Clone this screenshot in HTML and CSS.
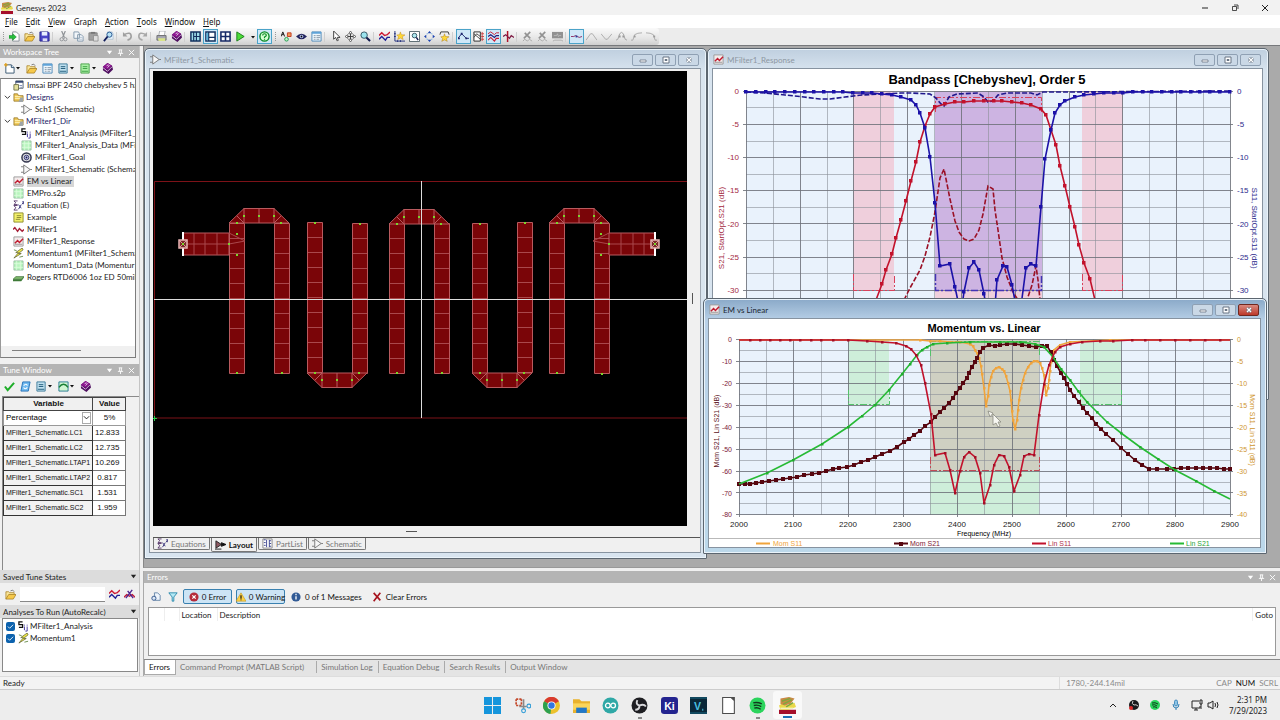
FILE: index.html
```html
<!DOCTYPE html>
<html lang="en">
<head>
<meta charset="utf-8">
<title>Genesys 2023</title>
<link rel="stylesheet" href="styles.css">
</head>
<body>
<svg class="defs" aria-hidden="true">
  <symbol id="app" viewBox="0 0 12 12"><path d="M0 9h12v3H0z" fill="#a50f2a"/><path d="M0 6l3-2 3 2 5-2 1 3-5 2H1z" fill="#e9d94a"/><path d="M1 1l6-1 4 1-3 4-4 1-3-1z" fill="#c98a45"/><path d="M2 3l6-2M3 5l6-3M5 7l5-3" stroke="#7da83e" stroke-width="1"/><path d="M1 8h9" stroke="#f3f0c0"/></symbol>
  <symbol id="import" viewBox="0 0 12 12"><path d="M4 1h4l3 3v7H4z" fill="#fff" stroke="#8a9098"/><path d="M0 5h4V3l4 3.5L4 10V8H0z" fill="#28c13c" stroke="#13802a" stroke-width=".6"/></symbol>
  <symbol id="open" viewBox="0 0 12 12"><path d="M1 11V3h3l1 1h5v2" fill="#f9e69a" stroke="#a57c1d" stroke-width=".8"/><path d="M1 11l3-5h8l-3 5z" fill="#f6c94c" stroke="#a57c1d" stroke-width=".8"/><path d="M6 2q3-2 4 1" fill="none" stroke="#777"/></symbol>
  <symbol id="save" viewBox="0 0 12 12"><path d="M1 1h9l1 1v9H1z" fill="#4a45c8" stroke="#25248a"/><path d="M3 1h6v4H3z" fill="#e8efff"/><path d="M4 8h5v3H4z" fill="#dcdcf5"/></symbol>
  <symbol id="cut" viewBox="0 0 12 12"><path d="M4 0l3 7M8 0L5 7" stroke="#8e9296" stroke-width="1.3"/><circle cx="4" cy="9" r="1.8" fill="none" stroke="#8e9296"/><circle cx="8" cy="9" r="1.8" fill="none" stroke="#8e9296"/></symbol>
  <symbol id="copy" viewBox="0 0 12 12"><path d="M1 1h5l1 2v5H1zM5 4h4l2 2v5H5z" fill="#f2f6fa" stroke="#8298ac"/><path d="M6 7h4M6 9h4" stroke="#9eb2c5" stroke-width=".7"/></symbol>
  <symbol id="paste" viewBox="0 0 12 12"><path d="M1 2h9v8H1z" fill="#a0a0a0" stroke="#858585"/><path d="M3 1h5v2H3z" fill="#777"/><path d="M6 5h5v6H6z" fill="#ddd" stroke="#888" stroke-width=".8"/></symbol>
  <symbol id="find" viewBox="0 0 12 12"><path d="M5 1h5l1 2v6H5z" fill="#e7f2fb" stroke="#9cb5c8" stroke-width=".7"/><circle cx="7" cy="4" r="2.8" fill="#b9e2f5" stroke="#23538e"/><path d="M5 6l-4 5" stroke="#101c5a" stroke-width="2"/></symbol>
  <symbol id="undo" viewBox="0 0 12 12"><path d="M2 4q8-4 8 2 0 3-4 4" fill="none" stroke="#a0a0a0" stroke-width="1.8"/><path d="M1 1v5h5z" fill="#a0a0a0"/></symbol>
  <symbol id="redo" viewBox="0 0 12 12"><path d="M10 4Q2 0 2 6q0 3 4 4" fill="none" stroke="#a8a8a8" stroke-width="1.8"/><path d="M11 1v5H6z" fill="#a8a8a8"/></symbol>
  <symbol id="print" viewBox="0 0 12 12"><path d="M4 0h6L9 5H3z" fill="#fff" stroke="#8a8f96" stroke-width=".7"/><path d="M1 5h10v5H1z" fill="#a9a9b4" stroke="#555" stroke-width=".8"/><path d="M2 8h8v3H3z" fill="#d8e488"/></symbol>
  <symbol id="book" viewBox="0 0 12 12"><path d="M6 0l5 3 1 4-5 5-6-4V4z" fill="#4f1060"/><path d="M1 5l5 4 5-5" fill="none" stroke="#e7c2ea"/><path d="M6 0L1 4l5 3 5-4z" fill="#8d1690"/><path d="M5 3l2-1 1 1-2 2" fill="none" stroke="#fff" stroke-width=".8"/></symbol>
  <symbol id="panes1" viewBox="0 0 12 12"><path d="M1 1h10v10H1z" fill="#9fdde9" stroke="#12305e" stroke-width="1.6"/><path d="M4 1v10M7 1v10M7 6h4M4 6h3" stroke="#12305e" stroke-width="1.2"/></symbol>
  <symbol id="panes2" viewBox="0 0 12 12"><path d="M1 1h10v10H1z" fill="#fff" stroke="#12305e" stroke-width="1.6"/><path d="M4 1v10M4 7h7" stroke="#12305e" stroke-width="1.4"/><path d="M1.500 2h2v8h-2z" fill="#5db4da"/></symbol>
  <symbol id="panes4" viewBox="0 0 12 12"><path d="M1 1h10v10H1z" fill="#fff" stroke="#172a66" stroke-width="1.7"/><path d="M6 1v10M1 6h10" stroke="#172a66" stroke-width="1.7"/></symbol>
  <symbol id="play" viewBox="0 0 12 12"><path d="M2 1l8 5-8 5z" fill="#4cdc39" stroke="#187c18"/></symbol>
  <symbol id="caret" viewBox="0 0 6 6"><path d="M1 2h4L3 4.500z" fill="#111"/></symbol>
  <symbol id="help" viewBox="0 0 12 12"><circle cx="6" cy="6" r="5" fill="#d6ffd2" stroke="#0a8a26" stroke-width="1.5"/><path d="M4 5q0-2 2-2t2 1.500Q8 5.500 6 6.500V8M6 9v1" fill="none" stroke="#0a8a26" stroke-width="1.3"/></symbol>
  <symbol id="shapes" viewBox="0 0 12 12"><path d="M0 6l2-5 2 5M1 4h2" fill="none" stroke="#111"/><path d="M7 2h4v4H7z" fill="#ef9a55" stroke="#c1361f"/><circle cx="6" cy="9" r="2" fill="#bff0c6" stroke="#1c9b4b"/></symbol>
  <symbol id="eye" viewBox="0 0 12 12"><path d="M0 6q6-6 12 0-6 6-12 0z" fill="#23255f"/><circle cx="6" cy="6" r="2" fill="#bfcdf5"/><circle cx="6" cy="6" r="1" fill="#000"/></symbol>
  <symbol id="props" viewBox="0 0 12 12"><path d="M1 1h10v10H1z" fill="#eef7fd" stroke="#4a86b8"/><path d="M1 1h10v2H1z" fill="#5ea3d8"/><path d="M3 5h2M6 5h4M3 7h2M6 7h4M3 9h2M6 9h3" stroke="#6d7f92" stroke-width=".8"/></symbol>
  <symbol id="cursor" viewBox="0 0 12 12"><path d="M4 0v9l2-2 2 4 1-1-1-3h3z" fill="#fff" stroke="#222" stroke-width=".9"/></symbol>
  <symbol id="pan" viewBox="0 0 12 12"><path d="M6 0l2 3H4zM6 12l2-3H4zM0 6l3-2v4zM12 6L9 4v4z" fill="#fff" stroke="#333" stroke-width=".7"/><path d="M6 3v6M3 6h6" stroke="#333"/></symbol>
  <symbol id="zoom" viewBox="0 0 12 12"><circle cx="4.500" cy="4.500" r="3.500" fill="#9ce4ee" stroke="#31525f"/><path d="M7 7l4 4" stroke="#111b4e" stroke-width="2.200"/></symbol>
  <symbol id="waves" viewBox="0 0 12 12"><path d="M0 5l3-3 3 3 3-1 3-3" fill="none" stroke="#cc1531" stroke-width="1.500"/><path d="M0 9l3-3 4 4 2-3h3" fill="none" stroke="#1e1e96" stroke-width="1.500"/></symbol>
  <symbol id="starchart" viewBox="0 0 12 12"><path d="M1 0v11h11M0 3h2M0 6h2M4 10v2M7 10v2" stroke="#1d2b79" fill="none"/><path d="M7 1l1 3 4 .3-3 2 1 3-3-1.600-3 1.600 1-3-2-2 3-.3z" fill="#ffd936" stroke="#c18814" stroke-width=".5"/></symbol>
  <symbol id="zoomfit" viewBox="0 0 12 12"><path d="M.5.5h11v11H.5z" fill="#fff" stroke="#4f5f66"/><circle cx="6" cy="5" r="2.500" fill="#aee8f0" stroke="#31525f"/><path d="M8 7l2 3" stroke="#111b4e" stroke-width="1.600"/></symbol>
  <symbol id="extents" viewBox="0 0 12 12"><path d="M6 0l2 2.500H4zM6 12l2-2.500H4zM0 6l2.500-2v4zM12 6L9.500 4v4z" fill="#1d43b0"/><path d="M3 3h1M8 3h1M3 9h1M8 9h1" stroke="#50a0d8"/></symbol>
  <symbol id="startable" viewBox="0 0 12 12"><path d="M2 1h8M2 1L1 4M10 1l1 3" stroke="#333" fill="none"/><path d="M6 3l1 3 4 .3-3 2 1 3-3-1.600-3 1.600 1-3-2-2 3-.3z" fill="#ffd936" stroke="#a77613" stroke-width=".5"/></symbol>
  <symbol id="trace" viewBox="0 0 12 12"><path d="M0 8l4-5 5 5h3" fill="none" stroke="#1b226b"/><path d="M3 2h2v2H3zM0 7h2v2H0zM8 7h2v2H8z" fill="#1b226b"/></symbol>
  <symbol id="smith" viewBox="0 0 12 12"><path d="M1 1h7v10H1z" fill="#fff" stroke="#222"/><path d="M1 7l3-4 4 3M1 3l7 6" stroke="#444" fill="none"/><path d="M10 1v10M9 3h3M9 6h3M9 9h3" stroke="#cc4040"/></symbol>
  <symbol id="waves3" viewBox="0 0 12 12"><path d="M0 3l3-2 4 3 2-2h3" fill="none" stroke="#cc1531"/><path d="M0 6l3-2 4 3 2-2h3" fill="none" stroke="#20207f" stroke-width="1.400"/><path d="M0 10l3-3 4 4 2-3h3" fill="none" stroke="#cc1531" stroke-width="1.200"/></symbol>
  <symbol id="marker" viewBox="0 0 12 12"><path d="M5 0v12" stroke="#b01028" stroke-width="1.600"/><path d="M0 6l3-2 4 4 2-3 3 2" fill="none" stroke="#7d1640" stroke-width="1.300"/></symbol>
  <symbol id="offx" viewBox="0 0 12 12"><path d="M2 8l7-7M3 2l6 6" stroke="#929292" stroke-width="1.800"/><path d="M1 11l2-2 3 2 2-2 3 2" fill="none" stroke="#a8a8a8"/></symbol>
  <symbol id="offbox" viewBox="0 0 12 12"><path d="M0 1h12v7H0z" fill="#919191"/><path d="M1 11l2-1h7l2 1" stroke="#aaa" fill="none"/><path d="M2 5h3l1-2 1 3 1-1h2" stroke="#ccc" fill="none" stroke-width=".7"/></symbol>
  <symbol id="flat" viewBox="0 0 12 12"><path d="M0 6h3l2-1 2 1 2 1 3-1" fill="none" stroke="#8b2760"/><path d="M5 5h2v2H5z" fill="#243a9a"/></symbol>
  <symbol id="peak" viewBox="0 0 12 12"><path d="M0 10l5-7h2l5 7" fill="none" stroke="#aaa"/></symbol>
  <symbol id="valley" viewBox="0 0 12 12"><path d="M0 3l5 6h2l5-6" fill="none" stroke="#aaa"/></symbol>
  <symbol id="bell" viewBox="0 0 12 12"><path d="M0 10l2-1 2-6q2-3 4 0l2 6 2 1" fill="none" stroke="#a2a2a2"/><path d="M3 5h2v2H3zM7 5h2v2H7z" fill="#999"/></symbol>
  <symbol id="rise" viewBox="0 0 12 12"><path d="M0 10h2l2-6q3-2 8-2" fill="none" stroke="#aaa"/><path d="M3 5h2v2H3z" fill="#999"/></symbol>
  <symbol id="fall" viewBox="0 0 12 12"><path d="M0 2q5 0 8 2l2 6h2" fill="none" stroke="#aaa"/><path d="M8 5h2v2H8z" fill="#999"/></symbol>
  <symbol id="newitem" viewBox="0 0 12 12"><path d="M2 2h6l3 3v6H2z" fill="#fff" stroke="#35536f"/><path d="M8 2v3h3" fill="#cfe0ef" stroke="#35536f"/><path d="M2 0v4M0 2h4" stroke="#e2a11d" stroke-width="1.400"/></symbol>
  <symbol id="sheetb" viewBox="0 0 12 12"><path d="M1 1h9v10H1z" fill="#bfe0ef" stroke="#3b7898"/><path d="M3 4h5M3 6h5M2 9h7" stroke="#1d5877"/></symbol>
  <symbol id="sheetg" viewBox="0 0 12 12"><path d="M1 1h9v10H1z" fill="#aaf0a5" stroke="#4aa04a"/><path d="M3 4h5M3 6h5M2 9h7" stroke="#3b9f43"/></symbol>
  <symbol id="data" viewBox="0 0 12 12"><path d="M1 1h10v10H1z" fill="#b8f5be" stroke="#8fb59a" stroke-width=".8"/><path d="M4 1v10M8 1v10M1 4h10M1 8h10" stroke="#dffbe0" stroke-width=".8"/></symbol>
  <symbol id="folder" viewBox="0 0 12 12"><path d="M1 10V2h4l1 2h5v6z" fill="#f0ca5b" stroke="#8f6d1e" stroke-width=".8"/><path d="M2 5h6M2 7h6" stroke="#fff3b8"/><path d="M8 6h3v5H6z" fill="#9fa5a8"/></symbol>
  <symbol id="workspace" viewBox="0 0 12 12"><path d="M3 1h8v8H3z" fill="#fff" stroke="#53636d"/><path d="M3 2h8" stroke="#364773" stroke-width="2"/><path d="M1 5h5v6H1z" fill="#e5e19c" stroke="#70734a"/><path d="M7 6h3M8 8h2" stroke="#7c8cb8"/></symbol>
  <symbol id="tri" viewBox="0 0 12 12"><path d="M3 1l7 5-7 5z" fill="#f7f7f7" stroke="#777"/><path d="M0 3h3M0 9h3M10 6h2" stroke="#777"/></symbol>
  <symbol id="sij" viewBox="0 0 12 12"><path d="M5 1H1v3h4v3H1" fill="none" stroke="#111" stroke-width="1.400"/><path d="M7 6v4M10 6v5H8M7 4v1M10 4v1" stroke="#3c309e" fill="none"/></symbol>
  <symbol id="goal" viewBox="0 0 12 12"><circle cx="6" cy="6" r="5" fill="#ddd" stroke="#33364e" stroke-width="1.600"/><circle cx="6" cy="6" r="2.500" fill="#c9cbe8" stroke="#33366e"/><circle cx="6" cy="6" r="1" fill="#15154e"/></symbol>
  <symbol id="graph" viewBox="0 0 12 12"><path d="M1 1h10v10H1z" fill="#f4ecec" stroke="#999"/><path d="M2 8l3-3 2 2 4-4" fill="none" stroke="#c01d31" stroke-width="1.600"/><path d="M2 9h8" stroke="#555" stroke-width=".6"/></symbol>
  <symbol id="equation" viewBox="0 0 12 12"><path d="M5 1H1l2 2-2 2h4M5 6H1l2 2.500L1 11h4" fill="none" stroke="#58386b"/><path d="M6 5l3 4M9 5l-3 5M10 2h2l-2 2h2" fill="none" stroke="#34307a"/></symbol>
  <symbol id="note" viewBox="0 0 12 12"><path d="M1 1h10v10H1z" fill="#f2f06a" stroke="#8b8a2c"/><path d="M4 4h5M4 6h5M3 8h5" stroke="#6c6c22" stroke-width=".8"/></symbol>
  <symbol id="wave" viewBox="0 0 12 12"><path d="M0 6l2-2 3 4 2-3 3 3 2-2" fill="none" stroke="#a61f38" stroke-width="1.500"/></symbol>
  <symbol id="bolt" viewBox="0 0 12 12"><path d="M10 0L3 5h3l-5 6 8-5H6l5-4z" fill="#f1e947" stroke="#5d6231" stroke-width=".8"/><path d="M1 2l3 1M7 10l4-1" stroke="#668b4d"/></symbol>
  <symbol id="board" viewBox="0 0 12 12"><path d="M0 8l3-3h9l-3 3z" fill="#7fb96c" stroke="#33602f" stroke-width=".6"/><path d="M0 8h9l3-3v1L9 10H0z" fill="#3e7a37"/></symbol>
  <symbol id="check" viewBox="0 0 12 12"><path d="M1 6l3 4 7-8" fill="none" stroke="#1fae2a" stroke-width="2.200"/></symbol>
  <symbol id="refresh" viewBox="0 0 12 12"><path d="M3 1h8L9 11H1z" fill="#71baf0" stroke="#2371b8"/><path d="M4 5q3-3 4 0M8 7q-3 3-4 0" fill="none" stroke="#fff" stroke-width="1.200"/></symbol>
  <symbol id="plotg" viewBox="0 0 12 12"><path d="M1 1h10v10H1z" fill="#cff6d2" stroke="#247890"/><path d="M1 7q5-7 10 0" fill="none" stroke="#198035" stroke-width="1.500"/></symbol>
  <symbol id="wavex" viewBox="0 0 12 12"><path d="M0 9l3-3 3 2 3-2 3 3" fill="none" stroke="#bc1736" stroke-width="1.400"/><path d="M2 10l7-9M4 2l6 8" stroke="#4c218f" stroke-width="1.500"/></symbol>
  <symbol id="pasteb" viewBox="0 0 12 12"><path d="M4 1h4l3 3v6H5z" fill="#eef4fb" stroke="#5a7da1"/><circle cx="3.500" cy="7.500" r="2.500" fill="#dce8f5" stroke="#3d5f94" stroke-width="1.200"/></symbol>
  <symbol id="filter" viewBox="0 0 12 12"><path d="M1 1h10L7 6v5H5V6z" fill="#b5e9f5" stroke="#1b7fa5"/></symbol>
  <symbol id="err" viewBox="0 0 12 12"><circle cx="6" cy="6" r="5.500" fill="#b52b3b"/><path d="M4 4l4 4M8 4l-4 4" stroke="#fff" stroke-width="1.500"/></symbol>
  <symbol id="warn" viewBox="0 0 12 12"><path d="M6 1l6 10H0z" fill="#ffd343" stroke="#c19421" stroke-width=".7"/><path d="M6 4v4M6 9v1" stroke="#111" stroke-width="1.400"/></symbol>
  <symbol id="info" viewBox="0 0 12 12"><circle cx="6" cy="6" r="5.500" fill="#315a95"/><path d="M6 5v4M6 2v2" stroke="#fff" stroke-width="1.600"/></symbol>
  <symbol id="redx" viewBox="0 0 12 12"><path d="M2 1l8 9M10 1L2 11" stroke="#a7141f" stroke-width="2"/></symbol>
  <symbol id="layout" viewBox="0 0 12 12"><path d="M1 2l6 4-6 4z" fill="#8d5961" stroke="#222"/><path d="M7 4l5 2-5 2zM0 11h7" fill="#111" stroke="#111"/></symbol>
  <symbol id="parts" viewBox="0 0 12 12"><path d="M1 1h10v10H1z" fill="#fff" stroke="#888"/><path d="M4 2H2M4 5H2M4 8H2M5 2v8M8 2v8M8 3h2M8 6h2M8 9h2" stroke="#38418d" fill="none"/></symbol>
  <symbol id="pin" viewBox="0 0 8 8"><path d="M2 1h4M3 1v4M5 1v4M1 5h6M4 5v3" stroke="#fff" fill="none"/></symbol>
  <symbol id="tick" viewBox="0 0 8 8"><path d="M1 4l2 2 4-4" stroke="#fff" fill="none"/></symbol>
  <symbol id="close" viewBox="0 0 8 8"><path d="M1 1l6 6M7 1L1 7" stroke="currentColor" fill="none"/></symbol>
  <symbol id="chev" viewBox="0 0 8 8"><path d="M1 2l3 3 3-3" stroke="currentColor" fill="none"/></symbol>
  <symbol id="down" viewBox="0 0 8 8"><path d="M1 2h6L4 6z" fill="currentColor"/></symbol>
  <symbol id="wmin" viewBox="0 0 10 8"><path d="M2 4h6v2H2z" fill="#fff" stroke="#697584" stroke-width=".8"/></symbol>
  <symbol id="wmax" viewBox="0 0 10 8"><path d="M2 1h6v6H2z" fill="#fff" stroke="#697584"/><path d="M4 3.500h2v1H4z" stroke="#697584" fill="none"/></symbol>
  <symbol id="wclose" viewBox="0 0 10 8"><path d="M3 2l4 4M7 2L3 6" stroke="#697584" stroke-width="2.600"/><path d="M3 2l4 4M7 2L3 6" stroke="#fff" stroke-width="1.300"/></symbol>
</svg>

<header class="titlebar">
  <svg class="ic"><use href="#app"/></svg><h1>Genesys 2023</h1>
  <div class="winbtns">
    <button aria-label="Minimize"><svg viewBox="0 0 8 8"><path d="M1 4h6" stroke="#222"/></svg></button>
    <button aria-label="Restore"><svg viewBox="0 0 8 8"><path d="M1.500 2.500h4v4h-4zM3 1h4v4" fill="none" stroke="#222" stroke-width=".8"/></svg></button>
    <button aria-label="Close"><svg viewBox="0 0 8 8"><use href="#close"/></svg></button>
  </div>
</header>
<nav class="menubar">
  <button><u>F</u>ile</button><button><u>E</u>dit</button><button><u>V</u>iew</button><button>Graph</button><button><u>A</u>ction</button><button><u>T</u>ools</button><button><u>W</u>indow</button><button><u>H</u>elp</button>
</nav>
<div class="toolrow">
<div class="toolbar">
  <i class="grip"></i>
  <button aria-label="Import"><svg class="ic"><use href="#import"/></svg></button><button aria-label="Open"><svg class="ic"><use href="#open"/></svg></button><button aria-label="Save"><svg class="ic"><use href="#save"/></svg></button>
  <i class="sep"></i>
  <button aria-label="Cut"><svg class="ic"><use href="#cut"/></svg></button><button aria-label="Copy"><svg class="ic"><use href="#copy"/></svg></button><button aria-label="Paste"><svg class="ic"><use href="#paste"/></svg></button><button aria-label="Find"><svg class="ic"><use href="#find"/></svg></button>
  <i class="sep"></i>
  <button aria-label="Undo"><svg class="ic"><use href="#undo"/></svg></button><button aria-label="Redo"><svg class="ic"><use href="#redo"/></svg></button>
  <i class="sep"></i>
  <button aria-label="Print"><svg class="ic"><use href="#print"/></svg></button><button aria-label="Help topics"><svg class="ic"><use href="#book"/></svg></button>
  <i class="sep"></i>
  <button aria-label="Panes"><svg class="ic"><use href="#panes1"/></svg></button><button class="on" aria-label="Side panes"><svg class="ic"><use href="#panes2"/></svg></button><button aria-label="Tile"><svg class="ic"><use href="#panes4"/></svg></button><button aria-label="Run"><svg class="ic"><use href="#play"/></svg></button><button class="narrow" aria-label="Run options"><svg class="car"><use href="#caret"/></svg></button><button class="on" aria-label="Help"><svg class="ic"><use href="#help"/></svg></button>
  <i class="grip"></i>
  <button aria-label="Shapes"><svg class="ic"><use href="#shapes"/></svg></button><button aria-label="View"><svg class="ic"><use href="#eye"/></svg></button><button aria-label="Properties"><svg class="ic"><use href="#props"/></svg></button>
  <i class="sep"></i>
  <button aria-label="Select"><svg class="ic"><use href="#cursor"/></svg></button><button aria-label="Pan"><svg class="ic"><use href="#pan"/></svg></button><button aria-label="Zoom"><svg class="ic"><use href="#zoom"/></svg></button>
  <i class="sep"></i>
  <button aria-label="Measurements"><svg class="ic"><use href="#waves"/></svg></button><button aria-label="Graph wizard"><svg class="ic"><use href="#starchart"/></svg></button><button aria-label="Zoom region"><svg class="ic"><use href="#zoomfit"/></svg></button><button aria-label="Zoom extents"><svg class="ic"><use href="#extents"/></svg></button><button aria-label="Table wizard"><svg class="ic"><use href="#startable"/></svg></button>
  <i class="sep"></i>
  <button class="on" aria-label="Trace symbols"><svg class="ic"><use href="#trace"/></svg></button><button aria-label="Chart legend"><svg class="ic"><use href="#smith"/></svg></button><button class="on" aria-label="Traces"><svg class="ic"><use href="#waves3"/></svg></button><button aria-label="Marker"><svg class="ic"><use href="#marker"/></svg></button>
  <i class="sep"></i>
  <button aria-label="Delete marker"><svg class="ic"><use href="#offx"/></svg></button><button aria-label="Delete all markers"><svg class="ic"><use href="#offx"/></svg></button><button aria-label="Marker box"><svg class="ic"><use href="#offbox"/></svg></button>
  <i class="sep"></i>
  <button class="on" aria-label="Normal marker"><svg class="ic"><use href="#flat"/></svg></button><button aria-label="Peak"><svg class="ic"><use href="#peak"/></svg></button><button aria-label="Valley"><svg class="ic"><use href="#valley"/></svg></button><button aria-label="Bandwidth"><svg class="ic"><use href="#bell"/></svg></button><button aria-label="Left edge"><svg class="ic"><use href="#rise"/></svg></button><button aria-label="Right edge"><svg class="ic"><use href="#fall"/></svg></button>
</div>
</div>

<main class="work">
<aside class="side">
  <section class="panel">
    <header class="cap"><h2>Workspace Tree</h2><svg class="g"><use href="#down"/></svg><svg class="g"><use href="#pin"/></svg><svg class="g"><use href="#close"/></svg></header>
    <div class="minibar">
      <button aria-label="New item"><svg class="ic"><use href="#newitem"/></svg><svg class="car"><use href="#caret"/></svg></button><button aria-label="Open item"><svg class="ic"><use href="#open"/></svg></button><button aria-label="Item properties"><svg class="ic"><use href="#props"/></svg></button><button aria-label="Sheets"><svg class="ic"><use href="#sheetb"/></svg><svg class="car"><use href="#caret"/></svg></button><button aria-label="Datasets"><svg class="ic"><use href="#sheetg"/></svg><svg class="car"><use href="#caret"/></svg></button><button aria-label="Tree help"><svg class="ic"><use href="#book"/></svg></button>
    </div>
    <div class="treebox">
      <ul class="tree">
        <li><svg class="ic"><use href="#workspace"/></svg><span>Imsai BPF 2450 chebyshev 5 ha</span></li>
        <li class="dir"><svg class="tw"><use href="#chev"/></svg><svg class="ic"><use href="#folder"/></svg><span>Designs</span></li>
        <li class="sub"><svg class="ic"><use href="#tri"/></svg><span>Sch1 (Schematic)</span></li>
        <li class="dir"><svg class="tw"><use href="#chev"/></svg><svg class="ic"><use href="#folder"/></svg><span>MFilter1_Dir</span></li>
        <li class="sub"><svg class="ic"><use href="#sij"/></svg><span>MFilter1_Analysis (MFilter1_S</span></li>
        <li class="sub"><svg class="ic"><use href="#data"/></svg><span>MFilter1_Analysis_Data (MFilt</span></li>
        <li class="sub"><svg class="ic"><use href="#goal"/></svg><span>MFilter1_Goal</span></li>
        <li class="sub"><svg class="ic"><use href="#tri"/></svg><span>MFilter1_Schematic (Schema</span></li>
        <li><svg class="ic"><use href="#graph"/></svg><span class="sel">EM vs Linear</span></li>
        <li><svg class="ic"><use href="#data"/></svg><span>EMPro.s2p</span></li>
        <li><svg class="ic"><use href="#equation"/></svg><span>Equation (E)</span></li>
        <li><svg class="ic"><use href="#note"/></svg><span>Example</span></li>
        <li><svg class="ic"><use href="#wave"/></svg><span>MFilter1</span></li>
        <li><svg class="ic"><use href="#graph"/></svg><span>MFilter1_Response</span></li>
        <li><svg class="ic"><use href="#bolt"/></svg><span>Momentum1 (MFilter1_Schema</span></li>
        <li><svg class="ic"><use href="#data"/></svg><span>Momentum1_Data (Momentur</span></li>
        <li><svg class="ic"><use href="#board"/></svg><span>Rogers RTD6006 1oz ED 50mil</span></li>
      </ul>
      <div class="hscroll"><i></i></div>
    </div>
  </section>
  <section class="panel">
    <header class="cap"><h2>Tune Window</h2><svg class="g"><use href="#down"/></svg><svg class="g"><use href="#pin"/></svg><svg class="g"><use href="#close"/></svg></header>
    <div class="minibar">
      <button aria-label="Apply"><svg class="ic"><use href="#check"/></svg></button><button aria-label="Refresh"><svg class="ic"><use href="#refresh"/></svg></button><button aria-label="Tune sheets"><svg class="ic"><use href="#sheetb"/></svg><svg class="car"><use href="#caret"/></svg></button><button aria-label="Tune plots"><svg class="ic"><use href="#plotg"/></svg><svg class="car"><use href="#caret"/></svg></button><button aria-label="Tune help"><svg class="ic"><use href="#book"/></svg></button>
    </div>
    <div class="tunebox">
      <table class="tune">
        <thead><tr><th>Variable</th><th>Value</th></tr></thead>
        <tbody>
        <tr class="pct"><td><div class="pick"><select aria-label="Step type"><option>Percentage</option></select><svg class="g"><use href="#chev"/></svg></div></td><td class="c">5%</td></tr>
        <tr><td>MFilter1_Schematic.LC1</td><td>12.833</td></tr>
        <tr><td>MFilter1_Schematic.LC2</td><td>12.735</td></tr>
        <tr><td>MFilter1_Schematic.LTAP1</td><td>10.269</td></tr>
        <tr><td>MFilter1_Schematic.LTAP2</td><td>&nbsp;0.817</td></tr>
        <tr><td>MFilter1_Schematic.SC1</td><td>&nbsp;1.531</td></tr>
        <tr><td>MFilter1_Schematic.SC2</td><td>&nbsp;1.959</td></tr>
        </tbody>
      </table>
    </div>
    <div class="subcap"><h3>Saved Tune States</h3><svg class="g"><use href="#down"/></svg></div>
    <div class="states"><button aria-label="Open state"><svg class="ic"><use href="#open"/></svg></button><input type="text" aria-label="Saved tune state"><button aria-label="Show state"><svg class="ic"><use href="#waves"/></svg></button><button aria-label="Remove state"><svg class="ic"><use href="#wavex"/></svg></button></div>
    <div class="subcap"><h3>Analyses To Run (AutoRecalc)</h3><svg class="g"><use href="#down"/></svg></div>
    <div class="runs">
      <label><input type="checkbox" checked><svg class="tk"><use href="#tick"/></svg><svg class="ic"><use href="#sij"/></svg>MFilter1_Analysis</label>
      <label><input type="checkbox" checked><svg class="tk"><use href="#tick"/></svg><svg class="ic"><use href="#bolt"/></svg>Momentum1</label>
    </div>
  </section>
</aside>

<div class="right">
<div class="mdi">
  <section class="win w-sch">
    <header class="wcap"><svg class="ic"><use href="#tri"/></svg><h2>MFilter1_Schematic</h2><div class="wb"><button aria-label="Minimize"><svg><use href="#wmin"/></svg></button><button aria-label="Maximize"><svg><use href="#wmax"/></svg></button><button aria-label="Close"><svg><use href="#wclose"/></svg></button></div></header>
    <div class="wbody sch">
      <svg class="canvas" viewBox="153 71 534 455" preserveAspectRatio="xMinYMin meet" role="img" aria-label="Filter layout">
        <defs>
          <symbol id="strip" viewBox="0 0 17 152" overflow="visible"><path d="M.5.5h15v150h-15z" fill="#7a0508" stroke="#b95a5e"/><path d="M1 15.500h14M1 30.500h14M1 45.500h14M1 60.500h14M1 75.500h14M1 90.500h14M1 105.500h14M1 120.500h14M1 135.500h14" stroke="#a9484c"/></symbol>
          <g id="bend" fill="#7a0508" stroke="#b95a5e"><path d="M0 15L15 .5h30L60 15zM15 0v15M30 0v15M45 0v15M15 15L8 8M45 15l7-7"/><path d="M7 14h2v2H7zM14 7h2v2h-2zM29 7h2v2h-2zM44 7h2v2h-2zM51 14h2v2h-2z" fill="#7bd62c" stroke="none"/></g>
          <g id="feed"><path d="M0 0h46v22H0z" fill="#7a0508" stroke="#b95a5e"/><path d="M11 0v22M22 0v22M34 0v22M0 11h46M46 0l16 8-16 3" fill="none" stroke="#a9484c"/><path d="M0-1v24" stroke="#fff" stroke-width="2"/><path d="M-4 7h8v8h-8z" fill="#7a2a2a" stroke="#eab6b6" stroke-width="1.500"/><path d="M-3 8l6 6M3 8l-6 6" stroke="#d99"/><path d="M-1 10h2v2h-2zM45 10h2v2h-2zM53 0h2v2h-2zM53 21h2v2h-2z" fill="#7bd62c"/></g>
        </defs>
        <path d="M153 71h534v455H153z" fill="#000"/>
        <path d="M687 181.500H154.500v236.500H687" fill="none" stroke="#7d1218"/>
        <use href="#strip" x="229" y="223" width="17" height="152"/><use href="#strip" x="274" y="223" width="17" height="152"/>
        <use href="#strip" x="307" y="222" width="17" height="152"/><use href="#strip" x="352" y="223" width="17" height="152"/>
        <use href="#strip" x="389" y="223" width="17" height="152"/><use href="#strip" x="434" y="223" width="17" height="152"/>
        <use href="#strip" x="472" y="223" width="17" height="152"/><use href="#strip" x="517" y="222" width="17" height="152"/>
        <use href="#strip" x="549" y="223" width="17" height="152"/><use href="#strip" x="594" y="223" width="17" height="152"/>
        <use href="#bend" transform="translate(229 208)"/><use href="#bend" transform="translate(389 209)"/><use href="#bend" transform="translate(549 208)"/>
        <use href="#bend" transform="translate(307 388) scale(1 -1)"/><use href="#bend" transform="translate(472 388) scale(1 -1)"/>
        <use href="#feed" transform="translate(183 233)"/><use href="#feed" transform="translate(655 233) scale(-1 1)"/>
        <path d="M236 372h2v2h-2zM281 372h2v2h-2zM314 222h2v2h-2zM359 223h2v2h-2zM396 372h2v2h-2zM441 372h2v2h-2zM479 223h2v2h-2zM524 222h2v2h-2zM556 372h2v2h-2zM601 373h2v2h-2z" fill="#7bd62c"/>
        <path d="M154 299.500h533M421.500 181v237" stroke="#dcdcdc"/>
        <path d="M152 418.500h5M154.500 416v5" stroke="#25d04c"/>
      </svg>
      <div class="vsplit"><i></i></div>
      <div class="hsplit"><i></i></div>
      <nav class="wtabs"><button><svg class="ic"><use href="#equation"/></svg>Equations</button><button class="cur"><svg class="ic"><use href="#layout"/></svg>Layout</button><button><svg class="ic"><use href="#parts"/></svg>PartList</button><button><svg class="ic"><use href="#tri"/></svg>Schematic</button></nav>
    </div>
  </section>

  <section class="win w-resp">
    <header class="wcap"><svg class="ic"><use href="#graph"/></svg><h2>MFilter1_Response</h2><div class="wb"><button aria-label="Minimize"><svg><use href="#wmin"/></svg></button><button aria-label="Maximize"><svg><use href="#wmax"/></svg></button><button aria-label="Close"><svg><use href="#wclose"/></svg></button></div></header>
    <div class="wbody">
      <svg class="chart" viewBox="713 69 549 324" role="img" aria-label="Bandpass response">
        <defs>
          <marker id="mb" markerWidth="4" markerHeight="4" refX="2" refY="2" markerUnits="userSpaceOnUse"><path d="M0 0h3.500v3.500H0z" fill="#1c12a8"/></marker>
          <marker id="mr" markerWidth="4" markerHeight="4" refX="2" refY="2" markerUnits="userSpaceOnUse"><path d="M0 0h3.500v3.500H0z" fill="#c2122c"/></marker>
          <marker id="ms" markerWidth="3" markerHeight="3" refX="1.500" refY="1.500" markerUnits="userSpaceOnUse"><path d="M0 0h3v3H0z" fill="#a50f26"/></marker>
          <marker id="md" markerWidth="4" markerHeight="4" refX="2" refY="2" markerUnits="userSpaceOnUse"><path d="M0 0h4v4H0z" fill="#56060f"/></marker>
          <marker id="mg" markerWidth="3" markerHeight="3" refX="1.500" refY="1.500" markerUnits="userSpaceOnUse"><path d="M0 0h3v3H0z" fill="#1fae2d"/></marker>
          <marker id="mo" markerWidth="3" markerHeight="3" refX="1.500" refY="1.500" markerUnits="userSpaceOnUse"><path d="M0 0h3v3H0z" fill="#f0a43c"/></marker>
        </defs>
        <text class="ctitle" x="987" y="84" text-anchor="middle">Bandpass [Chebyshev], Order 5</text>
        <path d="M746 91h484v300H746z" fill="#e9f2fc"/>
        <path d="M853 91h41v199h-41zM1082 91h41v199h-41zM935 290h107v101H935z" fill="#efcfdc"/>
        <path d="M935 91h107v199H935z" fill="#cdb4e2"/>
        <path d="M773.500 91v300M827.500 91v300M880.500 91v300M934.500 91v300M988.500 91v300M1042.500 91v300M1095.500 91v300M1149.500 91v300M1203.500 91v300M746 107.500h484M746 141.500h484M746 174.500h484M746 207.500h484M746 240.500h484M746 273.500h484" stroke="#8a8f98" stroke-opacity=".6"/>
        <path d="M746.500 91v300M800.500 91v300M853.500 91v300M907.500 91v300M961.500 91v300M1015.500 91v300M1069.500 91v300M1122.500 91v300M1176.500 91v300M1230.500 91v300M743 91.500h490M743 124.500h490M743 157.500h490M743 190.500h490M743 223.500h490M743 257.500h490M743 290.500h490" stroke="#6d7179" stroke-opacity=".85"/>
        <path d="M853.500 274v16.500h41V274M1082.500 274v16.500h40V274M935.500 112V97.500h106V112" fill="none" stroke="#d8415b" stroke-dasharray="7 2 2 2"/>
        <path d="M935.500 274v16.500h106V274" fill="none" stroke="#4234b4" stroke-width="1.500" stroke-dasharray="7 2 2 2"/>
        <polyline points="904,300 910,288 915,279 920,270 925,256 930,237 935,212 940,178 944,169 950,199 955,221 959,232 964,239 969,241 974,239 979,230 983,214 988,186 993,189 995,210 998,230 1002,258 1007,277 1013,292 1018,300" class="ln dash" stroke="#9a1026"/>
        <polyline points="1026,303 1032,285 1036,266 1038,280 1040,300" class="ln dash" stroke="#9a1026"/>
        <polyline points="746,92 766,93 785,95 804,97 820,99 830,99 845,97 862,95 882,94 901,93 911,93 930,94 936,98 941,104 944,106 949,97 957,94 978,93 984,97 988,102 993,101 998,95 1007,93 1031,93 1037,95 1043,92 1065,92 1230,91" class="ln dash" stroke="#20178c"/>
        <polyline points="876,300 882,284 886,270 892,254 896,238 901,220 906,201 911,181 916,162 920,142 925,126 930,114 935,107 945,104 955,102 964,102 974,101 984,101 994,101 1002,101 1012,102 1022,103 1031,105 1041,109 1046,115 1051,130 1056,145 1060,166 1065,186 1070,207 1075,227 1079,245 1084,263 1090,279 1095,300" class="ln" stroke="#c2122c" marker-mid="url(#mr)"/>
        <polyline points="746,92 756,92 766,92 775,92 785,92 795,92 805,92 814,92 824,92 834,92 843,92 853,93 863,93 872,93 882,94 892,95 901,97 911,100 916,105 920,113 925,128 930,157 935,203 940,266 950,264 955,287 959,306" class="ln" stroke="#1c12a8" marker-mid="url(#mb)" marker-start="url(#mb)"/>
        <polyline points="962,306 964,292 969,268 974,262 979,270 984,294 986,306" class="ln" stroke="#1c12a8" marker-mid="url(#mb)"/>
        <polyline points="995,306 997,280 1003,266 1007,267 1012,285 1016,306" class="ln" stroke="#1c12a8" marker-mid="url(#mb)"/>
        <polyline points="1021,306 1026,268 1031,264 1036,266 1041,207 1045,159 1051,130 1055,113 1060,105 1065,101 1075,97 1084,95 1094,94 1104,93 1114,93 1123,93 1133,92 1143,92 1152,92 1162,92 1172,92 1181,92 1191,92 1200,92 1210,92 1220,92 1230,92" class="ln" stroke="#1c12a8" marker-mid="url(#mb)" marker-end="url(#mb)"/>
        <g class="ax" text-anchor="end" fill="#a32841"><text x="739" y="94">0</text><text x="739" y="127">-5</text><text x="739" y="160">-10</text><text x="739" y="193">-15</text><text x="739" y="227">-20</text><text x="739" y="260">-25</text><text x="739" y="293">-30</text></g>
        <g class="ax" fill="#2c2a8c"><text x="1237" y="94">0</text><text x="1237" y="127">-5</text><text x="1237" y="160">-10</text><text x="1237" y="193">-15</text><text x="1237" y="227">-20</text><text x="1237" y="260">-25</text><text x="1237" y="293">-30</text></g>
        <text class="ax" fill="#a32841" text-anchor="middle" transform="translate(724 228) rotate(-90)">S21, StartOpt.S21 (dB)</text>
        <text class="ax" fill="#2c2a8c" text-anchor="middle" transform="translate(1252 228) rotate(90)">S11, StartOpt.S11 (dB)</text>
      </svg>
    </div>
  </section>

  <section class="win active w-em">
    <header class="wcap"><svg class="ic"><use href="#graph"/></svg><h2>EM vs Linear</h2><div class="wb"><button aria-label="Minimize"><svg><use href="#wmin"/></svg></button><button aria-label="Maximize"><svg><use href="#wmax"/></svg></button><button class="x" aria-label="Close"><svg><use href="#wclose"/></svg></button></div></header>
    <div class="wbody">
      <svg class="chart" viewBox="709 319 551 229" role="img" aria-label="Momentum versus linear response">
        <text class="ctitle sm" x="984" y="332" text-anchor="middle">Momentum vs. Linear</text>
        <path d="M739 339h491v176H739z" fill="#e9f2fc"/>
        <path d="M848 339h41v66h-41zM1080 339h41v66h-41zM930 471h109v44H930z" fill="#ceeeda"/>
        <path d="M930 339h109v132H930z" fill="#cfd0c2"/>
        <path d="M766.500 339v176M821.500 339v176M875.500 339v176M930.500 339v176M984.500 339v176M1039.500 339v176M1093.500 339v176M1148.500 339v176M1203.500 339v176M739 350.500h491M739 372.500h491M739 394.500h491M739 416.500h491M739 438.500h491M739 460.500h491M739 482.500h491M739 503.500h491" stroke="#8a8f98" stroke-opacity=".6"/>
        <path d="M739.500 339v178M793.500 339v178M848.500 339v178M903.500 339v178M957.500 339v178M1012.500 339v178M1066.500 339v178M1121.500 339v178M1175.500 339v178M1230.500 339v178M736 339.500h497M736 361.500h497M736 383.500h497M736 405.500h497M736 427.500h497M736 449.500h497M736 471.500h497M736 492.500h497M736 514.500h497" stroke="#6d7179" stroke-opacity=".85"/>
        <path d="M848.500 390v14.500h41V390M1080.500 390v14.500h41V390M930.500 356v-14.500h109V356" fill="none" stroke="#54c26a" stroke-dasharray="7 2 2 2"/>
        <path d="M930.500 457v13.500h109V457" fill="none" stroke="#c24a55" stroke-dasharray="7 2 2 2"/>
        <polyline points="739,340 920,340 930,341 940,341 950,342 960,342 970,344 973,346 975,350 977,353 979,358 981,366 982,374 984,388 986,406 988,396 989,385 991,377 993,371 996,368 999,367 1002,369 1004,371 1006,376 1008,383 1010,391 1011,400 1012,411 1013,420 1015,429 1017,420 1018,410 1019,400 1021,388 1023,380 1025,373 1028,367 1031,363 1034,361 1037,361 1040,363 1042,368 1044,375 1045,386 1046,395 1048,388 1049,380 1050,371 1051,362 1054,350 1060,345 1070,342 1110,340 1230,340" class="ln" stroke="#f0a43c" marker-mid="url(#mo)"/>
        <polyline points="739,484 745,484 750,484 756,483 762,482 769,481 776,480 783,479 790,478 797,477 804,475 812,474 819,473 826,471 833,469 839,468 847,467 854,465 861,462 868,460 875,457 882,454 890,451 897,447 904,442 909,439 914,435 920,431 925,426 931,422 935,417 940,412 944,408 949,403 953,398 956,393 960,388 963,383 967,378 969,373 972,367 975,362 977,358 980,352 983,348 989,345 995,346 1000,345 1007,344 1015,344 1022,345 1029,346 1036,347 1042,346 1047,346 1051,352 1054,360 1057,366 1061,373 1064,378 1067,384 1070,390 1074,396 1079,402 1083,408 1087,413 1092,418 1096,424 1101,429 1106,434 1113,440 1121,448 1128,454 1135,460 1142,465 1149,469 1157,469 1167,469 1174,469 1181,468 1188,468 1196,468 1203,468 1210,468 1217,468 1224,469 1230,469" class="ln" stroke="#56060f" marker-mid="url(#md)" marker-start="url(#md)" marker-end="url(#md)"/>
        <polyline points="739,484 767,473 793,460 822,444 848,427 862,416 875,405 889,390 902,374 910,364 917,355 922,350 927,347 933,344 947,343 970,342 1000,342 1020,342 1035,344 1044,347 1053,357 1061,369 1070,380 1078,391 1087,402 1097,412 1107,422 1121,433 1140,447 1158,459 1175,470 1196,481 1214,491 1230,499" class="ln" stroke="#27ba35" marker-mid="url(#mg)"/>
        <polyline points="739,340 750,340 760,340 770,340 780,340 790,340 800,340 811,340 821,340 833,340 848,340 867,341 882,342 896,343 906,346 911,349 916,355 921,365 925,383 931,414 935,455 945,453 950,470 955,493 960,471 964,457 969,452 975,457 980,473 984,503 990,485 994,465 999,455 1004,456 1009,467 1014,491 1020,475 1024,456 1029,454 1034,455 1039,415 1044,384 1049,365 1055,352 1060,347 1070,344 1082,342 1100,341 1113,341 1132,340 1145,340 1160,340 1175,340 1190,340 1205,340 1220,340 1230,340" class="ln" stroke="#c2122c" marker-mid="url(#ms)"/>
        <g class="ax sm" text-anchor="end" fill="#7c2036"><text x="732" y="342">0</text><text x="732" y="364">-10</text><text x="732" y="386">-20</text><text x="732" y="408">-30</text><text x="732" y="430">-40</text><text x="732" y="452">-50</text><text x="732" y="474">-60</text><text x="732" y="496">-70</text><text x="732" y="517">-80</text></g>
        <g class="ax sm" fill="#cf962f"><text x="1237" y="342">0</text><text x="1237" y="364">-5</text><text x="1237" y="386">-10</text><text x="1237" y="408">-15</text><text x="1237" y="430">-20</text><text x="1237" y="452">-25</text><text x="1237" y="474">-30</text><text x="1237" y="496">-35</text><text x="1237" y="517">-40</text></g>
        <g class="ax" text-anchor="middle" fill="#222"><text x="739" y="527">2000</text><text x="793" y="527">2100</text><text x="848" y="527">2200</text><text x="902" y="527">2300</text><text x="957" y="527">2400</text><text x="1012" y="527">2500</text><text x="1066" y="527">2600</text><text x="1121" y="527">2700</text><text x="1175" y="527">2800</text><text x="1230" y="527">2900</text></g>
        <text class="ax sm" x="984" y="536" text-anchor="middle" fill="#000">Frequency (MHz)</text>
        <text class="ax sm" fill="#5c1224" text-anchor="middle" transform="translate(719 431) rotate(-90)">Mom S21, Lin S21 (dB)</text>
        <text class="ax sm" fill="#cf962f" text-anchor="middle" transform="translate(1250 430) rotate(90)">Mom S11, Lin S11 (dB)</text>
        <path d="M709 538.500h551" stroke="#b9b9b9"/>
        <path d="M756 543.500h14" stroke="#f0a43c" stroke-width="2"/><path d="M894 543.500h14" stroke="#56060f" stroke-width="2"/><path d="M899 542h4v4h-4z" fill="#56060f"/><path d="M1032 543.500h14" stroke="#c2122c" stroke-width="2"/><path d="M1170 543.500h14" stroke="#27ba35" stroke-width="2"/>
        <g class="ax sm"><text x="773" y="546" fill="#f0a43c">Mom S11</text><text x="910" y="546" fill="#7c2036">Mom S21</text><text x="1048" y="546" fill="#b0304a">Lin S11</text><text x="1186" y="546" fill="#27a338">Lin S21</text></g>
        <path d="M988 411l5 2-3 4zM993 414v11l3-2 2 4 2-1-2-4h3z" fill="#f7f7f2" stroke="#8a8a80" stroke-width=".8"/>
      </svg>
    </div>
  </section>
</div>

<section class="errors">
  <header class="cap"><h2>Errors</h2><svg class="g"><use href="#down"/></svg><svg class="g"><use href="#pin"/></svg><svg class="g"><use href="#close"/></svg></header>
  <div class="ebar">
    <button aria-label="Copy errors"><svg class="ic"><use href="#pasteb"/></svg></button><button aria-label="Filter"><svg class="ic"><use href="#filter"/></svg></button>
    <button class="tog"><svg class="ic"><use href="#err"/></svg>0 Error</button><button class="tog"><svg class="ic"><use href="#warn"/></svg>0 Warning</button><button class="plain"><svg class="ic"><use href="#info"/></svg>0 of 1 Messages</button><button class="plain"><svg class="ic"><use href="#redx"/></svg>Clear Errors</button>
  </div>
  <div class="elist"><table><thead><tr><th></th><th></th><th>Location</th><th>Description</th><th class="goto">Goto</th></tr></thead></table></div>
  <nav class="etabs"><button class="cur">Errors</button><button class="wide">Command Prompt (MATLAB Script)</button><button>Simulation Log</button><button>Equation Debug</button><button>Search Results</button><button>Output Window</button></nav>
</section>
</div>
</main>

<footer class="status"><span class="ready">Ready</span><span class="coord">1780,-244.14mil</span><span>CAP</span><span class="num">NUM</span><span>SCRL</span></footer>
<footer class="taskbar">
  <div class="apps">
    <button aria-label="Start"><svg viewBox="0 0 16 16"><path d="M0 0h7.500v7.500H0zM8.500 0H16v7.500H8.500zM0 8.500h7.500V16H0zM8.500 8.500H16V16H8.500z" fill="#1595dc"/></svg></button>
    <button aria-label="Snipping Tool"><svg viewBox="0 0 16 16"><path d="M2 2h6M2 2v6h5V2" fill="none" stroke="#c3482b" stroke-width="1.600" stroke-dasharray="2 1"/><path d="M9 2v9M5 9h7" stroke="#888" stroke-width="1.500"/><circle cx="9" cy="13" r="1.800" fill="none" stroke="#2b9ad6"/><circle cx="14" cy="8.500" r="1.800" fill="none" stroke="#2b9ad6"/></svg></button>
    <button aria-label="Chrome"><svg viewBox="0 0 16 16"><circle cx="8" cy="8" r="8" fill="#ecc12c"/><path d="M8 8L1 4a8 8 0 0 1 14 0z" fill="#d93a2e"/><path d="M8 8L1 4a8 8 0 0 0 6 12z" fill="#2da04e"/><circle cx="8" cy="8" r="3.800" fill="#fff"/><circle cx="8" cy="8" r="3" fill="#3476e0"/></svg></button>
    <button aria-label="File Explorer"><svg viewBox="0 0 16 16"><path d="M0 2h6l2 2h8v11H0z" fill="#e9b22d"/><path d="M0 6h16v6H0z" fill="#fbd55b"/><path d="M3 10h10v5H3z" fill="#2277c7"/></svg></button>
    <button aria-label="Arduino"><svg viewBox="0 0 16 16"><circle cx="8" cy="8" r="7.500" fill="#2fa8a6"/><circle cx="5.500" cy="8" r="2.200" fill="none" stroke="#fff" stroke-width="1.200"/><circle cx="10.500" cy="8" r="2.200" fill="none" stroke="#fff" stroke-width="1.200"/></svg></button>
    <button class="run" aria-label="OBS Studio"><svg viewBox="0 0 16 16"><circle cx="8" cy="8" r="7.500" fill="#1e1e22"/><path d="M8 8q-4-1-2-5M8 8q4-2 6 1M8 8q0 4-4 4" fill="none" stroke="#d9d9dc" stroke-width="1.800"/></svg></button>
    <button aria-label="KiCad"><svg viewBox="0 0 16 16"><rect width="16" height="16" rx="3" fill="#24248f"/><text x="8" y="12" text-anchor="middle" fill="#fff" class="logo">Ki</text></svg></button>
    <button aria-label="Vegas"><svg viewBox="0 0 16 16"><path d="M0 0h16v16H0z" fill="#0a2839"/><path d="M0 1h16M0 15h16" stroke="#1a6a86"/><text x="7" y="12" text-anchor="middle" fill="#4ac0e0" class="logo">V</text><path d="M12 11v2" stroke="#4ac0e0"/></svg></button>
    <button aria-label="LibreOffice"><svg viewBox="0 0 16 16"><path d="M2.500.5h8l3 3v12h-11z" fill="#fff" stroke="#4b4b4b"/><path d="M10 0l4 4v-4z" fill="#4b4b4b"/></svg></button>
    <button class="run" aria-label="Spotify"><svg viewBox="0 0 16 16"><circle cx="8" cy="8" r="7.500" fill="#2bd45c"/><path d="M4 5.500q4-1 8 1M4.500 8q4-1 7 1M5 10.500q3-1 6 1" fill="none" stroke="#10381c" stroke-width="1.300"/></svg></button>
    <button class="curapp" aria-label="Genesys"><svg viewBox="0 0 12 12"><use href="#app"/></svg></button>
  </div>
  <div class="tray">
    <button aria-label="Hidden icons"><svg viewBox="0 0 12 12"><path d="M3 8l3-3 3 3" fill="none" stroke="#222"/></svg></button>
    <button aria-label="Recording"><svg viewBox="0 0 12 12"><circle cx="6" cy="6" r="5" fill="#1a1a1c"/><path d="M6 6q-3-1-1-4M6 6q2-1 4 1" fill="none" stroke="#ccc"/><circle cx="3" cy="9" r="2" fill="#da2a2a"/></svg></button>
    <button aria-label="Spotify tray"><svg viewBox="0 0 12 12"><circle cx="6" cy="6" r="5" fill="#2bd45c"/><path d="M3 4q3-1 6 1M3 6q3-1 5 1M4 8q2-1 4 1" fill="none" stroke="#10381c"/></svg></button>
    <button aria-label="Microphone"><svg viewBox="0 0 12 12"><rect x="4.500" y="1" width="3" height="6" rx="1.500" fill="#8cc3e6" stroke="#2d7fb5" stroke-width=".8"/><path d="M3 5q0 4 3 4t3-4M6 9v2" fill="none" stroke="#2d7fb5"/></svg></button>
    <button aria-label="Network"><svg viewBox="0 0 12 12"><path d="M8 2H1v7h8V7M3 11h4M5 9v2M9 1h2v4H9zM10 5v5" fill="none" stroke="#222"/></svg></button>
    <button class="vol" aria-label="Volume"><svg viewBox="0 0 12 12"><path d="M1 4h2l3-2v8L3 8H1zM8 4q1 2 0 4M10 3q2 3 0 6" fill="none" stroke="#222"/></svg></button>
    <div class="clock"><span>2:31 PM</span><span>7/29/2023</span></div>
  </div>
</footer>
</body>
</html>
```
FILE: styles.css
```css
* { box-sizing: border-box; }
body { margin: 0; height: 100vh; display: flex; flex-direction: column; overflow: hidden; background: #f0f0f0; color: #222; font: 8px/12px Lato, "Noto Sans", sans-serif; }
button { border: 0; padding: 0; margin: 0; background: none; color: inherit; font: inherit; white-space: nowrap; display: flex; align-items: center; justify-content: center; }
h1, h2, h3 { margin: 0; font-size: inherit; font-weight: 400; white-space: nowrap; }
ul { margin: 0; padding: 0; list-style: none; }
svg { flex: none; display: block; }
.defs { position: absolute; width: 0; height: 0; }
.ic { width: 11px; height: 11px; }
.car { width: 6px; height: 6px; }
.g { width: 7px; height: 7px; }

.titlebar { flex: none; height: 15px; display: flex; align-items: center; gap: 3px; padding-left: 1px; background: #f2f2f2; }
.titlebar .ic { width: 12px; height: 12px; }
.winbtns { margin-left: auto; display: flex; }
.winbtns button { width: 30px; height: 15px; color: #222; }
.winbtns svg { width: 8px; height: 8px; }
.menubar { flex: none; height: 13px; display: flex; gap: 8px; padding-left: 5px; background: #fff; color: #111; font-family: "Noto Sans", sans-serif; }
.toolrow { flex: none; height: 18px; display: flex; background: #ececec; border-bottom: 1px solid #77797c; }
.toolbar { display: flex; align-items: center; background: linear-gradient(#fafafa, #e6e6e6 60%, #cfcfcf); border-radius: 0 3px 3px 0; }
.toolbar button { width: 15px; height: 15px; }
.toolbar .narrow { width: 9px; }
.toolbar .on { background: #cfe8f8; border: 1px solid #4ba3c9; }
.grip { width: 7px; height: 9px; border-left: 1px dotted #999; margin-left: 3px; margin-right: -3px; }
.sep { width: 4px; height: 10px; border-left: 1px solid #cfcfcf; }

.work { flex: 1; min-height: 0; display: flex; }
.side { width: 140px; flex: none; display: flex; flex-direction: column; gap: 6px; border-right: 1px solid #c4c4c4; background: #f0f0f0; }
.panel { flex: 1; min-height: 0; display: flex; flex-direction: column; }
.cap { flex: none; height: 12px; display: flex; align-items: center; gap: 4px; padding: 0 4px 0 3px; background: #b4b4b4; color: #fff; }
.cap h2 { flex: 1; }
.minibar { flex: none; height: 20px; display: flex; align-items: center; gap: 5px; padding-left: 4px; }
.treebox { flex: 1; min-height: 0; margin-right: 3px; background: #fff; border: 1px solid #7d7d7d; border-left-color: #999; display: flex; flex-direction: column; overflow: hidden; }
.tree { flex: 1; overflow: hidden; }
.tree li { height: 12px; display: flex; align-items: center; gap: 3px; padding-left: 12px; white-space: nowrap; }
.tree .sub { padding-left: 20px; }
.tree .dir { padding-left: 3px; gap: 2px; color: #1c1a66; }
.tree .tw { width: 7px; height: 7px; color: #222; }
.tree .sel { background: #d6d6d6; line-height: 11px; padding-right: 2px; }
.hscroll { height: 11px; background: #f0f0f0; padding: 4px 0 0 11px; }
.hscroll i { display: block; width: 56%; height: 1px; background: #808080; }
.tunebox { flex: 1; min-height: 0; margin-left: 2px; border-top: 1px solid #8a8a8a; border-left: 1px solid #8a8a8a; font: 8px/12px "Liberation Sans", Arial, sans-serif; color: #111; }
.tune { width: 123px; table-layout: fixed; border-collapse: collapse; }
.tune th:first-child { width: 89px; }
.tune th, .tune td { height: 15px; padding: 0 1px 0 2px; border: 1px solid #444; white-space: nowrap; }
.tune th { height: 13px; background: #f0f0f0; }
.tune td { background: #fff; border-color: #777; }
.tune td:first-child { background: #f2f2f2; border-color: #333; font-size: 7px; }
.tune .pct td { background: #fff; border-color: #999; }
.tune .c { text-align: center; }
.pick { display: flex; align-items: center; }
.pick select { flex: 1; appearance: none; border: 0; padding: 0; background: none; font: inherit; font-size: 8px; height: 12px; }
.pick .g { width: 9px; height: 12px; border: 1px solid #aaa; }
.subcap { flex: none; height: 13px; display: flex; align-items: center; justify-content: space-between; padding: 0 2px 0 3px; background: #dcdcdc; }
.states { flex: none; height: 22px; display: flex; align-items: center; gap: 4px; padding: 0 4px 0 5px; }
.states input { flex: 1; min-width: 0; height: 15px; border: 0; border-bottom: 1px solid #888; background: #fff; }
.runs { flex: none; height: 54px; margin: 0 1px 4px 2px; padding: 1px 3px; background: #fff; border: 1px solid #888; }
.runs label { height: 12px; display: flex; align-items: center; gap: 1px; }
.runs input { appearance: none; width: 9px; height: 9px; margin: 0; background: #0c62ae; border-radius: 2px; }
.runs .tk { width: 7px; height: 7px; margin-left: -9px; margin-right: 3px; }

.right { flex: 1; min-width: 0; display: flex; flex-direction: column; gap: 3px; padding-left: 3px; }
.mdi { flex: 1; min-height: 0; position: relative; overflow: hidden; background: #aaa; border-left: 1px solid #888; border-bottom: 1px solid #999; }
.win { position: absolute; display: flex; flex-direction: column; border: 1px solid #5c6670; border-radius: 5px 5px 1px 1px; background: linear-gradient(#bfcfdf, #d8e4ef 22px, #d8e4ef); padding: 0 5px 5px 4px; box-shadow: inset 0 0 0 1px #eaf3fa; }
.w-sch { left: 0; top: 2px; width: 563px; height: 511px; }
.w-resp { left: 563px; top: 2px; width: 562px; height: 352px; }
.w-em { left: 559px; top: 252px; width: 564px; height: 256px; }
.active { background: linear-gradient(#8aa9c8, #b9d1e8 22px, #bcd8ea); }
.wcap { flex: none; height: 19px; display: flex; align-items: center; gap: 3px; padding: 2px 2px 0 1px; color: #8d97a2; }
.active .wcap { color: #1c2732; }
.wb { margin-left: auto; display: flex; gap: 2px; }
.wb button { width: 21px; height: 12px; border: 1px solid #8fa0b3; border-radius: 2px; background: #cad8e6; }
.wb svg { width: 10px; height: 8px; }
.wb .x { background: linear-gradient(#d98a80, #bd3829); border-color: #70281f; }
.wbody { flex: 1; min-height: 0; background: #fff; border: 1px solid #8793a0; overflow: hidden; }
.chart { width: 100%; height: auto; }
.sch { display: grid; grid-template: 1fr 12px 14px / 1fr 13px; padding: 2px 0 0 3px; background: #f0f0f0; border-right-color: #a0a9b4; }
.canvas { width: 100%; height: 100%; background: #000; min-height: 0; }
.vsplit { display: flex; align-items: center; padding-left: 5px; }
.vsplit i { width: 1px; height: 11px; background: #555; }
.hsplit { grid-column: 1 / -1; display: flex; align-items: center; justify-content: center; padding-right: 30px; border-bottom: 1px solid #555; }
.hsplit i { width: 11px; height: 1px; background: #555; }
.wtabs { grid-column: 1 / -1; display: flex; gap: 1px; color: #777; }
.wtabs button { gap: 3px; height: 12px; padding: 0 3px; border: 1px solid #777; border-top: 0; border-radius: 0 0 2px 2px; }
.wtabs .cur { height: 14px; color: #111; font-weight: 700; }
.ctitle { font: bold 13px "Liberation Sans", Arial, sans-serif; }
.ctitle.sm { font-size: 11px; }
.ax { font: 8px "Liberation Sans", Arial, sans-serif; }
.ax.sm { font-size: 7px; }
.ln { fill: none; stroke-width: 1.6; }
.dash { stroke-dasharray: 5 2; }

.errors { flex: none; display: flex; flex-direction: column; height: 105px; border-left: 1px solid #aaa; }
.ebar { flex: none; height: 24px; display: flex; align-items: center; gap: 4px; padding: 3px 0 0 7px; }
.ebar button { gap: 4px; color: #111; }
.ebar > button:nth-child(2) { margin: 0 1px 0 3px; }
.ebar .ic { width: 10px; height: 10px; }
.ebar .tog { height: 15px; width: 49px; gap: 3px; border: 1px solid #3a81b0; border-radius: 2px; background: #cce4f5; }
.ebar .plain { margin: 0 4px 0 2px; }
.elist { flex: 1; margin: 0 4px; background: #fff; border: 1px solid #999; }
.elist table { width: 100%; border-collapse: collapse; }
.elist th { height: 13px; padding: 0 2px; font-weight: 400; text-align: left; border-right: 1px solid #eee; width: 15px; }
.elist th:nth-child(3) { width: 38px; }
.elist th:nth-child(4) { width: auto; }
.elist .goto { width: 22px; border: 0; }
.etabs { flex: none; height: 17px; margin-top: 3px; display: flex; align-items: flex-start; border-top: 1px solid #888; background: #e4e4e4; color: #777; }
.etabs button { height: 12px; margin-top: 1px; padding: 0 5px 0 4px; border-left: 1px solid #aaa; }
.etabs .cur { height: 15px; margin: 0; background: #fff; color: #111; border: 1px solid #aaa; border-top: 0; }
.etabs .wide { border: 0; padding-right: 12px; }

.status { flex: none; height: 14px; display: flex; align-items: center; gap: 4px; padding: 0 2px 0 3px; background: #f3f3f3; border-top: 1px solid #ddd; border-bottom: 1px solid #ccc; color: #8a8a8a; }
.status .ready { flex: 1; color: #222; }
.status .coord { width: 153px; padding-left: 6px; border-left: 1px solid #ddd; }
.status .num { color: #111; }
.taskbar { flex: none; height: 30px; display: flex; align-items: center; justify-content: flex-end; position: relative; background: #ededed; font-family: "Noto Sans", sans-serif; }
.apps { position: absolute; left: 50%; top: 0; width: 324px; height: 30px; margin-left: -162px; display: flex; align-items: center; }
.apps button { flex: 1; height: 28px; border-radius: 3px; }
.apps svg { width: 17px; height: 17px; }
.run { background: linear-gradient(#888, #888) center 26px / 4px 2px no-repeat; }
.curapp { background: linear-gradient(#1b6fb5, #1b6fb5) center 25px / 9px 2px no-repeat, #f9f9f9; }
.logo { font: bold 10px "Liberation Sans", Arial, sans-serif; }
.tray { display: flex; align-items: center; gap: 9px; padding-right: 13px; }
.tray svg { width: 12px; height: 12px; }
.tray .vol { margin-left: -5px; }
.clock { display: flex; flex-direction: column; text-align: right; line-height: 11px; margin-left: 1px; }
```
